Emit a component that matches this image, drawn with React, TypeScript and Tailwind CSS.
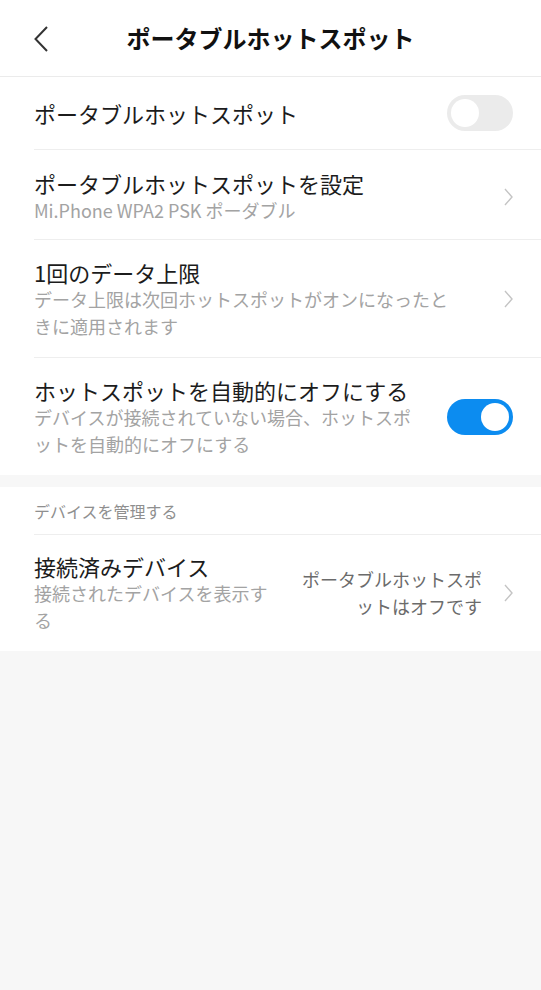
import React from "react";

const font = { fontFamily: '"Noto Sans CJK JP", "Noto Sans", sans-serif' };

const Chevron: React.FC = () => (
    <svg width="9" height="18" viewBox="0 0 9 18" className="flex-shrink-0">
        <path d="M1 1 L8 9 L1 17" fill="none" stroke="#c4c4c4" strokeWidth="1.4" />
    </svg>
);

const Toggle: React.FC<{ on: boolean }> = ({ on }) => (
    <div
        className={`w-[66px] h-[36px] rounded-full flex items-center px-[4px] flex-shrink-0 ${
            on ? "bg-[#0c8cf0] justify-end" : "bg-[#ebebeb] justify-start"
        }`}
    >
        <div className="w-[28px] h-[28px] rounded-full bg-white" />
    </div>
);

const Row: React.FC<{
    title: string;
    subtitle?: string;
    textWidth?: string;
    right: React.ReactNode;
    last?: boolean;
    pad?: string;
}> = ({ title, subtitle, textWidth = "", right, last, pad = "pt-[18px] pb-[17px]" }) => (
    <div
        className={`ml-[34px] pr-[28px] flex items-center justify-between ${pad} ${
            last ? "" : "border-b border-[#eeeeee]"
        }`}
    >
        <div className={textWidth}>
            <div className="text-[22px] leading-[28px] text-[#1c1c1c]">{title}</div>
            {subtitle && (
                <div className="text-[18px] leading-[27px] text-[#a3a3a3]">{subtitle}</div>
            )}
        </div>
        {right}
    </div>
);

export default function App() {
    return (
        <div className="w-[541px] min-h-[990px] bg-[#f7f7f7]" style={font}>
            <div className="h-[77px] bg-white border-b border-[#ebebeb] relative flex items-center justify-center">
                <svg
                    width="14"
                    height="26"
                    viewBox="0 0 14 26"
                    className="absolute left-[34px] top-[26px]"
                >
                    <path d="M13 1 L1.5 13 L13 25" fill="none" stroke="#333333" strokeWidth="2" />
                </svg>
                <h1 className="text-[24px] font-bold text-[#111111] leading-none">
                    ポータブルホットスポット
                </h1>
            </div>

            <div className="bg-white">
                <Row
                    title="ポータブルホットスポット"
                    pad="h-[73px]"
                    right={<Toggle on={false} />}
                />
                <Row
                    title="ポータブルホットスポットを設定"
                    subtitle="Mi.Phone WPA2 PSK ポーダブル"
                    pad="pt-[19px] pb-[15px]"
                    right={<Chevron />}
                />
                <Row
                    title="1回のデータ上限"
                    subtitle="データ上限は次回ホットスポットがオンになったときに適用されます"
                    textWidth="w-[422px]"
                    right={<Chevron />}
                />
                <Row
                    title="ホットスポットを自動的にオフにする"
                    subtitle="デバイスが接続されていない場合、ホットスポットを自動的にオフにする"
                    textWidth="w-[386px]"
                    right={<Toggle on={true} />}
                    last
                />
            </div>

            <div className="h-[12px]" />

            <div className="bg-white">
                <div className="ml-[34px] h-[48px] flex items-center border-b border-[#eeeeee] text-[16px] text-[#8f8f8f]">
                    デバイスを管理する
                </div>
                <div className="ml-[34px] pr-[28px] py-[17px] flex items-center">
                    <div className="w-[242px]">
                        <div className="text-[22px] leading-[28px] text-[#1c1c1c]">
                            接続済みデバイス
                        </div>
                        <div className="text-[18px] leading-[27px] text-[#a3a3a3]">
                            接続されたデバイスを表示する
                        </div>
                    </div>
                    <div className="flex-1 flex items-center justify-end gap-[22px]">
                        <div className="w-[186px] text-right text-[18px] leading-[27px] text-[#6b6b6b]">
                            ポータブルホットスポットはオフです
                        </div>
                        <Chevron />
                    </div>
                </div>
            </div>
        </div>
    );
}
